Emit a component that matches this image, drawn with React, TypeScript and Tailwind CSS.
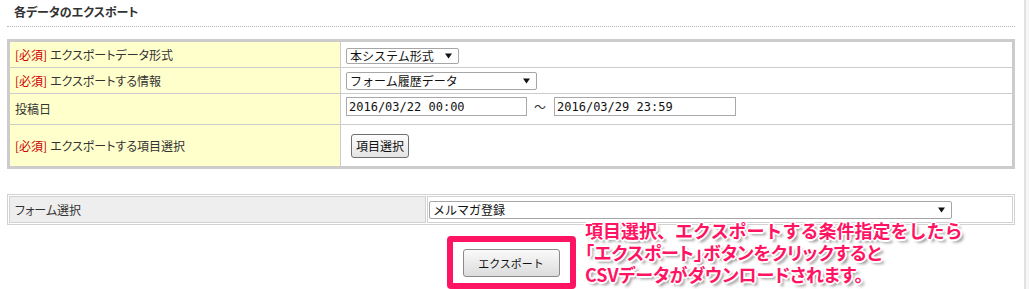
import React from "react";

const Arrow = () => (
  <svg width="7" height="6" viewBox="0 0 7 6" className="shrink-0">
    <path d="M0 0.5 H7 L3.5 5.5 Z" fill="#111" />
  </svg>
);

const FakeSelect = ({ label, className }: { label: string; className: string }) => (
  <div
    className={`flex items-center justify-between rounded-[2px] border border-[#a6a6a6] bg-white pl-[3px] pr-[6px] text-[12px] leading-none text-[#111] ${className}`}
  >
    <span>{label}</span>
    <Arrow />
  </div>
);

const Required = () => <span className="mr-[3px] text-[#cc0000]">[必須]</span>;

const Label = ({ children }: { children: React.ReactNode }) => (
  <div className="flex w-[331px] shrink-0 items-center border-r border-[#cccccc] bg-[#ffffcc] pl-[5px] text-[12px] text-[#333] [font-feature-settings:'palt']">
    {children}
  </div>
);

const DateInput = ({ value, className = "" }: { value: string; className?: string }) => (
  <div
    className={`flex h-[19px] items-center border border-[#a9a9a9] bg-white pl-[2px] font-['DejaVu_Sans_Mono',monospace] text-[12px] leading-none text-[#111] ${className}`}
  >
    {value}
  </div>
);

export default function App() {
  return (
    <div className="relative h-[289px] w-[1029px] overflow-hidden bg-white font-['Noto_Sans_CJK_JP',sans-serif]">
      <div className="flex h-full">
        <div className="w-[1024px] shrink-0 pl-[7px] pr-[9px]">
          {/* heading */}
          <div className="h-[27px] border-b border-dotted border-[#b5b5b5] pl-[7px] pt-[4px] text-[12px] font-bold leading-[16px] text-[#333] [font-feature-settings:'palt']">
            各データのエクスポート
          </div>

          {/* export settings */}
          <div className="mt-[12px] border-[3px] border-[#cccccc]">
            <div className="flex h-[26px] border-b border-[#cccccc]">
              <Label>
                <Required />
                エクスポートデータ形式
              </Label>
              <div className="flex flex-1 items-start pl-[5px] pt-[6px]">
                <FakeSelect label="本システム形式" className="h-[16px] w-[113px]" />
              </div>
            </div>
            <div className="flex h-[26px] border-b border-[#cccccc]">
              <Label>
                <Required />
                エクスポートする情報
              </Label>
              <div className="flex flex-1 items-start pl-[5px] pt-[4px]">
                <FakeSelect label="フォーム履歴データ" className="h-[18px] w-[191px]" />
              </div>
            </div>
            <div className="flex h-[31px] border-b border-[#cccccc]">
              <Label>投稿日</Label>
              <div className="flex flex-1 items-start pl-[5px] pt-[3px]">
                <DateInput value="2016/03/22 00:00" className="w-[181px]" />
                <span className="ml-[7px] mr-[8px] text-[12px] leading-[19px] text-[#333]">～</span>
                <DateInput value="2016/03/29 23:59" className="w-[182px]" />
              </div>
            </div>
            <div className="flex h-[41px]">
              <Label>
                <Required />
                エクスポートする項目選択
              </Label>
              <div className="flex flex-1 items-center pl-[10px]">
                <button className="h-[24px] rounded-[3px] border border-[#707070] bg-gradient-to-b from-[#fdfdfd] to-[#e4e4e4] px-[4px] text-[12px] leading-none text-[#111]">
                  項目選択
                </button>
              </div>
            </div>
          </div>

          {/* form select */}
          <div className="mt-[25px] flex gap-[1px] border border-[#d2d2d2] p-[1px]">
            <div className="flex h-[27px] w-[417px] items-center border border-[#d2d2d2] bg-[#eeeeee] pl-[5px] text-[12px] text-[#333] [font-feature-settings:'palt']">
              フォーム選択
            </div>
            <div className="flex h-[27px] flex-1 items-center border border-[#d2d2d2] pl-[1px]">
              <FakeSelect label="メルマガ登録" className="h-[18px] w-[523px]" />
            </div>
          </div>

          {/* export button */}
          <div className="mt-[24px] flex justify-center">
            <button className="h-[28px] w-[97px] rounded-[3px] border border-[#8a8a8a] bg-gradient-to-b from-[#fafafa] to-[#dcdcdc] text-[11px] leading-none text-[#111]">
              エクスポート
            </button>
          </div>
        </div>
        <div className="flex-1 border-l-2 border-[#e2e2e2] bg-[#f6f6f6]" />
      </div>

      {/* annotation overlay */}
      <div className="absolute left-[447px] top-[236px] h-[53px] w-[129px] rounded-[4px] border-[6px] border-[#ff1464]" />
      <div className="absolute left-[585px] top-[219px] text-[18px] font-bold leading-[22px] text-[#ff1464] [text-shadow:-1px_-1px_0_#fff,1px_-1px_0_#fff,-1px_1px_0_#fff,1px_1px_0_#fff,0_-2px_0_#fff,0_2px_0_#fff,-2px_0_0_#fff,2px_0_0_#fff,3px_3px_3px_rgba(0,0,0,0.45)]">
        <div>項目選択、エクスポートする条件指定をしたら</div>
        <div className="[font-feature-settings:'palt']">「エクスポート」ボタンをクリックすると</div>
        <div className="[font-feature-settings:'palt']">CSVデータがダウンロードされます。</div>
      </div>
    </div>
  );
}
